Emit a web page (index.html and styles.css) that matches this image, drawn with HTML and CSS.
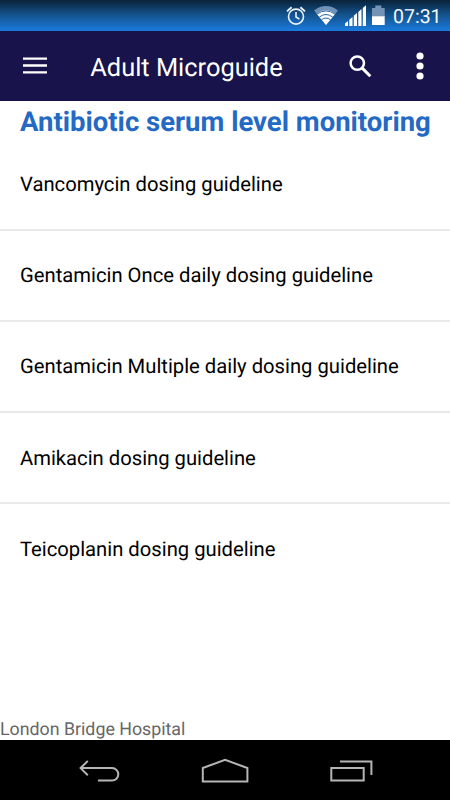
FILE: index.html
```html
<!DOCTYPE html>
<html lang="en">
<head>
<meta charset="utf-8">
<meta name="viewport" content="width=device-width">
<title>Adult Microguide</title>
<link rel="stylesheet" href="styles.css">
</head>
<body>
<div class="status">
  <svg class="status-icons" width="106" height="31" viewBox="0 0 106 31" fill="none">
    <g stroke="#e9f3fb" stroke-width="1.6">
      <circle cx="12" cy="16.6" r="7.5"/>
      <path d="M12 12v5l3.4 2.2"/>
      <path d="M3 11.4l4.6-4.2M21 11.4l-4.6-4.2" stroke-width="1.9"/>
    </g>
    <path d="M30 10.4Q42 1.8 54 10.4L42 25Z" fill="#6f91b6"/>
    <path d="M32.7 13.7Q42 6.8 51.3 13.7L42 25Z" fill="#fff"/>
    <path d="M33 14.1Q42 7.7 51 14.1M35.4 17Q42 12 48.6 17M37.6 19.6Q42 16.5 46.4 19.6" stroke="#2565a6" stroke-width="1"/>
    <path d="M61 26v-2.6l3-2.4v5zM65.3 26v-6.3l3.2-2.8V26zM69.8 26V15.8l3.2-2.8v13zM74.3 26V12l3.2-2.9V26zM78.8 26V8l3.2-2.8V26z" fill="#fff"/>
    <path d="M88 8h3.3V5.6h6V8h3.4v9H88z" fill="#7293b4"/>
    <path d="M88 16.3h12.7V25H88z" fill="#fff"/>
  </svg>
  <span class="clock">07:31</span>
</div>
<header class="bar">
  <svg class="menu" width="24" height="18" viewBox="0 0 24 18"><path d="M0 1.6h24M0 8.5h24M0 15.4h24" stroke="#fff" stroke-width="2.3"/></svg>
  <h1><span>Adult Microguide</span></h1>
  <svg class="search" width="23" height="23" viewBox="0 0 23 23" fill="none" stroke="#fff"><circle cx="8.3" cy="8.1" r="6.7" stroke-width="2.5"/><path d="M13 12.9l8.3 8.3" stroke-width="3"/></svg>
  <svg class="more" width="8" height="28" viewBox="0 0 8 28" fill="#fff"><circle cx="4" cy="4" r="3.6"/><circle cx="4" cy="14" r="3.6"/><circle cx="4" cy="24" r="3.6"/></svg>
</header>
<main>
  <h2><span>Antibiotic serum level monitoring</span></h2>
  <ul>
    <li><span>Vancomycin dosing guideline</span></li>
    <li><span>Gentamicin Once daily dosing guideline</span></li>
    <li><span>Gentamicin Multiple daily dosing guideline</span></li>
    <li><span>Amikacin dosing guideline</span></li>
    <li><span>Teicoplanin dosing guideline</span></li>
  </ul>
  <p class="hospital"><span>London Bridge Hospital</span></p>
</main>
<nav>
  <svg width="44" height="24" viewBox="0 0 44 24"><path d="M10.8 1.9L3.6 9.1l7.2 7.2M3.6 9.1h31.5a6.2 6.2 0 0 1 0 12.4H21"/></svg>
  <svg width="48" height="26" viewBox="0 0 48 26"><path d="M1.8 23.5V10L24.1 1.8 46.4 10v13.5z"/></svg>
  <svg width="44" height="24" viewBox="0 0 44 24"><path d="M2.3 8.9h32.4v12.6H2.3zM11 2.5h31.4V16"/></svg>
</nav>
</body>
</html>
```
FILE: styles.css
```css
* { box-sizing: border-box; margin: 0; padding: 0; }
body {
  display: flex;
  flex-direction: column;
  width: 450px;
  height: 800px;
  overflow: hidden;
  background: #fff;
  color: #000;
  font-family: Roboto, "Liberation Sans", sans-serif;
  text-rendering: geometricPrecision;
}
svg { display: block; flex: none; }
.status {
  display: flex;
  height: 31px;
  padding-left: 284px;
  background: linear-gradient(#082238, #135089 45%, #1a7bdc);
}
.clock {
  padding-left: 3px;
  line-height: 33px;
  font-size: 19.5px;
  white-space: nowrap;
  color: #f4f9fd;
}
.bar {
  display: flex;
  align-items: center;
  height: 70px;
  padding-left: 23px;
  background: #18134b;
  color: #fff;
}
.bar h1 {
  width: 258.4px;
  margin-left: 43.3px;
  padding-top: 3px;
  font-size: 25.4px;
  font-weight: 400;
  white-space: nowrap;
}
.more { margin-left: 44px; }
main {
  display: flex;
  flex-direction: column;
  height: 639px;
}
h2 {
  height: 38.3px;
  padding-left: 20px;
  line-height: 42px;
  font-size: 27.5px;
  font-weight: 700;
  color: #246ac4;
  white-space: nowrap;
}
ul { list-style: none; }
li {
  display: flex;
  align-items: center;
  height: 91.25px;
  padding-left: 20px;
  border-bottom: 2px solid #e9e9e9;
  font-size: 20.23px;
  white-space: nowrap;
}
li:last-child { border-color: transparent; }
.hospital {
  margin-top: auto;
  line-height: 22px;
  padding-top: 1px;
  margin-bottom: -1px;
  font-size: 17.8px;
  color: #666;
  white-space: nowrap;
}
nav {
  display: flex;
  justify-content: space-between;
  align-items: center;
  height: 60px;
  padding: 2px 77px 0 77px;
  background: #000;
}
nav path { fill: none; stroke: #b5b5b5; stroke-width: 2; }
```
